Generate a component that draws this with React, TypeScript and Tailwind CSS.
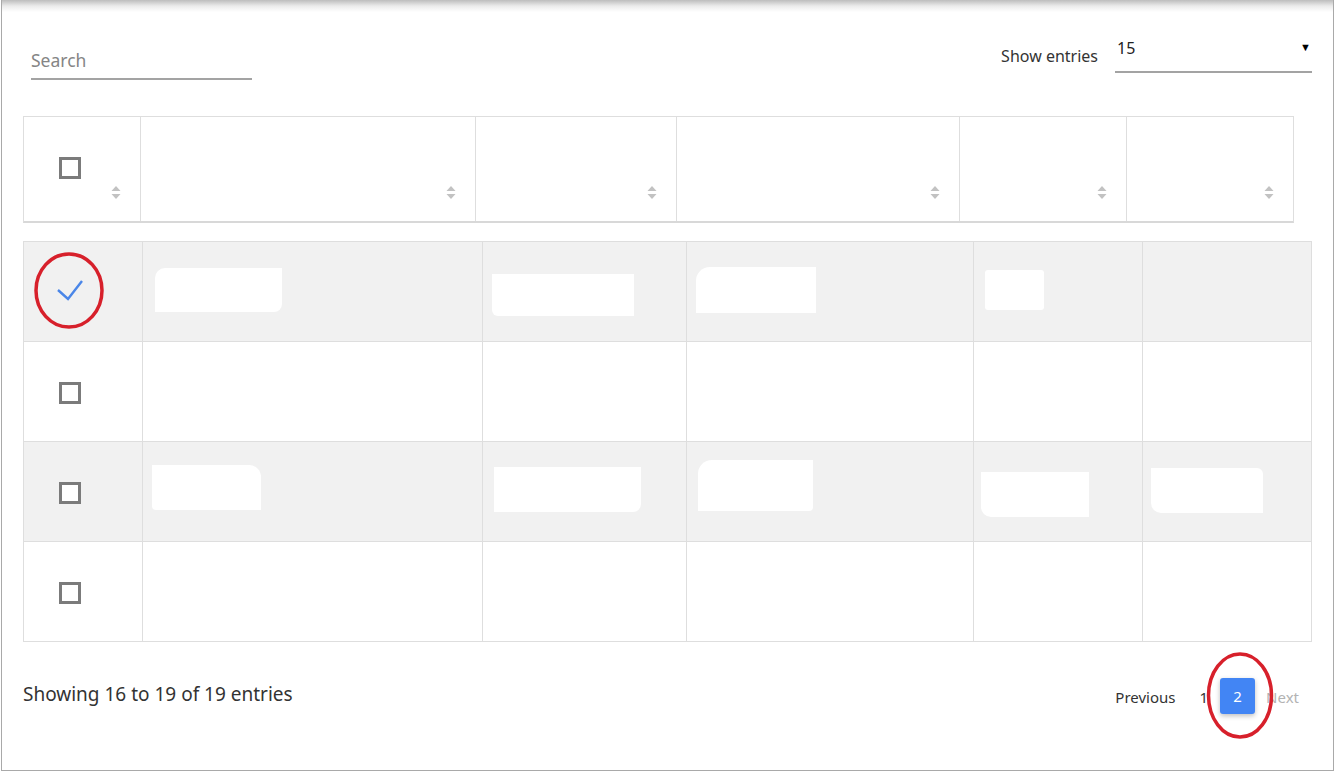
const font = { fontFamily: '"Noto Sans", "Open Sans", Arial, sans-serif' };

function SortIcon() {
  return (
    <svg width="10" height="13" viewBox="0 0 10 13" className="shrink-0">
      <path d="M5 0 L9.5 5 L0.5 5 Z" fill="#c2c2c2" />
      <path d="M5 13 L9.5 8 L0.5 8 Z" fill="#c2c2c2" />
    </svg>
  );
}

function Box() {
  return <div className="w-[22px] h-[22px] border-[3px] border-[#7b7b7b] bg-white shrink-0" />;
}

function Check() {
  return (
    <svg width="26" height="22" viewBox="0 0 26 22" className="shrink-0">
      <path d="M1 11 L11 20 L25 2" fill="none" stroke="#4a86e8" strokeWidth="2.4" />
    </svg>
  );
}

const headCols = ["w-[117px]", "w-[335px]", "w-[201px]", "w-[283px]", "w-[167px]", "w-[166px]"];
const bodyCols = ["w-[119px]", "w-[340px]", "w-[204px]", "w-[287px]", "w-[169px]", "w-[168px]"];

// redacted cell contents (white patches), per row / column
const rows: { gray: boolean; checked: boolean; blobs: (string | null)[] }[] = [
  {
    gray: true,
    checked: true,
    blobs: [
      "ml-[12px] mt-[26px] w-[127px] h-[44px] rounded-tl-[10px] rounded-br-[8px]",
      "ml-[9px] mt-[32px] w-[142px] h-[42px] rounded-bl-[6px]",
      "ml-[9px] mt-[25px] w-[120px] h-[46px] rounded-tl-[14px]",
      "ml-[11px] mt-[28px] w-[59px] h-[40px] rounded-[3px]",
      null,
    ],
  },
  { gray: false, checked: false, blobs: [null, null, null, null, null] },
  {
    gray: true,
    checked: false,
    blobs: [
      "ml-[9px] mt-[23px] w-[109px] h-[45px] rounded-tr-[12px] rounded-bl-[4px]",
      "ml-[11px] mt-[25px] w-[147px] h-[45px] rounded-br-[8px]",
      "ml-[11px] mt-[18px] w-[115px] h-[51px] rounded-tl-[14px] rounded-br-[4px]",
      "ml-[7px] mt-[30px] w-[108px] h-[45px] rounded-bl-[10px]",
      "ml-[8px] mt-[26px] w-[112px] h-[45px] rounded-bl-[10px] rounded-tr-[6px]",
    ],
  },
  { gray: false, checked: false, blobs: [null, null, null, null, null] },
];

export default function App() {
  return (
    <div className="relative w-[1336px] h-[773px] bg-white overflow-hidden text-[#333]" style={font}>
      <div className="ml-[1px] w-[1333px] h-[771px] border-x border-b border-[#a9a9a9] bg-white">
        <div className="h-[12px] bg-linear-to-b from-[#bdbdbd] via-[#ebebeb] to-white" />

        {/* toolbar */}
        <div className="flex justify-between items-start pl-[29px] pr-[21px]">
          <div className="mt-[32px] w-[221px] h-[36px] border-b-2 border-[#a3a3a3] flex items-center pb-[2px] text-[17.5px] text-[#858585]">
            Search
          </div>
          <div className="flex items-start gap-[17px]">
            <div className="mt-[32px] text-[16px] leading-[24px] text-[#333]">Show entries</div>
            <div className="mt-[24px] w-[197px] h-[37px] border-b-2 border-[#a3a3a3] flex justify-between items-start text-[16px] leading-[24px] text-[#222]">
              <span className="ml-[2px]">15</span>
              <span className="text-[11px] leading-[22px] text-black mr-[1px]">▼</span>
            </div>
          </div>
        </div>

        {/* header table */}
        <div className="ml-[21px] mt-[36px] w-[1271px] flex border border-[#dedede] border-b-2 border-b-[#d8d8d8]">
          {headCols.map((w, i) => (
            <div
              key={i}
              className={`${w} h-[104px] flex justify-between items-end pb-[22px] pr-[19px] ${i < 5 ? "border-r border-[#dedede]" : ""}`}
            >
              {i === 0 ? (
                <div className="self-start mt-[40px] ml-[35px]">
                  <Box />
                </div>
              ) : (
                <span />
              )}
              <SortIcon />
            </div>
          ))}
        </div>

        {/* body table */}
        <div className="ml-[21px] mt-[18px] w-[1289px] border-l border-r border-t border-[#dedede]">
          {rows.map((r, ri) => (
            <div key={ri} className={`flex h-[100px] border-b border-[#dedede] ${r.gray ? "bg-[#f1f1f1]" : "bg-white"}`}>
              <div className={`${bodyCols[0]} border-r border-[#dedede] flex items-center pl-[35px] pt-[3px]`}>
                {r.checked ? (
                  <div className="-ml-[2px] mt-[-7px]">
                    <Check />
                  </div>
                ) : (
                  <Box />
                )}
              </div>
              {r.blobs.map((b, ci) => (
                <div key={ci} className={`${bodyCols[ci + 1]} ${ci < 4 ? "border-r border-[#dedede]" : ""}`}>
                  {b && <div className={`bg-white ${b}`} />}
                </div>
              ))}
            </div>
          ))}
        </div>

        {/* footer */}
        <div className="ml-[21px] mt-[36px] w-[1289px] h-[36px] flex justify-between items-center pr-[1px]">
          <div className="text-[19px] text-[#333] -mt-[4px]">Showing 16 to 19 of 19 entries</div>
          <div className="flex items-center gap-[2px] text-[15px]">
            <span className="px-[12px] text-[#333] mt-[2px]">Previous</span>
            <span className="px-[10px] text-[#333] mt-[2px]">1</span>
            <span className="w-[35px] h-[36px] rounded-[3px] bg-[#4285f4] text-white flex items-center justify-center shadow-[0_2px_5px_rgba(0,0,0,0.25)]">
              2
            </span>
            <span className="pl-[9px] pr-[12px] text-[#b3b3b3] mt-[2px]">Next</span>
          </div>
        </div>
      </div>

      {/* red annotation marks */}
      <svg className="absolute inset-0 pointer-events-none" width="1336" height="773">
        <ellipse cx="69" cy="290.5" rx="33" ry="36.5" fill="none" stroke="#d7202b" strokeWidth="3.5" />
        <ellipse cx="1240" cy="695.5" rx="31.5" ry="41.5" fill="none" stroke="#d7202b" strokeWidth="3.5" />
      </svg>
    </div>
  );
}
